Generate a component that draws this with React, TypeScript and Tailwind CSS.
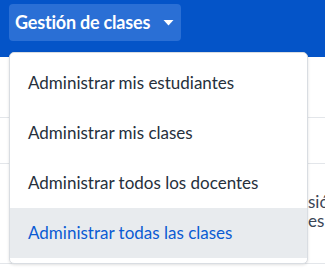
const items = [
  "Administrar mis estudiantes",
  "Administrar mis clases",
  "Administrar todos los docentes",
  "Administrar todas las clases",
];

const App = () => {
  const active = 3;
  return (
    <div className="relative w-[325px] h-[278px] overflow-hidden bg-white font-['Lato',sans-serif]">
      <header className="h-[57px] bg-[#0454c8] pl-[9px] pt-[4px]">
        <button className="flex h-[37px] w-[172px] items-center rounded-[4px] bg-[#2a6fd5] pl-[6px] pr-[7px] text-[18px] font-bold tracking-[-0.2px] text-white">
          <span>Gestión de clases</span>
          <svg className="ml-auto" width="11" height="6" viewBox="0 0 11 6">
            <path d="M0.5 0h10L5.5 5.5z" fill="#fff" />
          </svg>
        </button>
      </header>
      <div className="h-[61px] border-b border-[#e3e6ea]" />
      <div className="h-[46px] border-b border-[#e3e6ea]" />
      <div className="h-[100px] border-b border-[#e3e6ea] pt-[28px] text-[17px] leading-[19px] text-[#3b4656] whitespace-nowrap">
        <p className="pl-[299px]">esión</p>
        <p className="pl-[308px]">es</p>
      </div>

      <div className="absolute left-[9px] top-[52px] w-[299px] rounded-[5px] border border-[#d9dde2] bg-white py-[5px] shadow-[0_1px_3px_rgba(0,0,0,0.12)]">
        {items.map((label, i) => (
          <div
            key={label}
            className={
              i === active
                ? "flex h-[50px] items-center bg-[#e8ebee] pl-[18px] text-[17px] text-[#0b5bd3]"
                : "flex h-[50px] items-center pl-[18px] text-[17px] text-[#26303c]"
            }
          >
            {label}
          </div>
        ))}
      </div>
    </div>
  );
};

export default App;
